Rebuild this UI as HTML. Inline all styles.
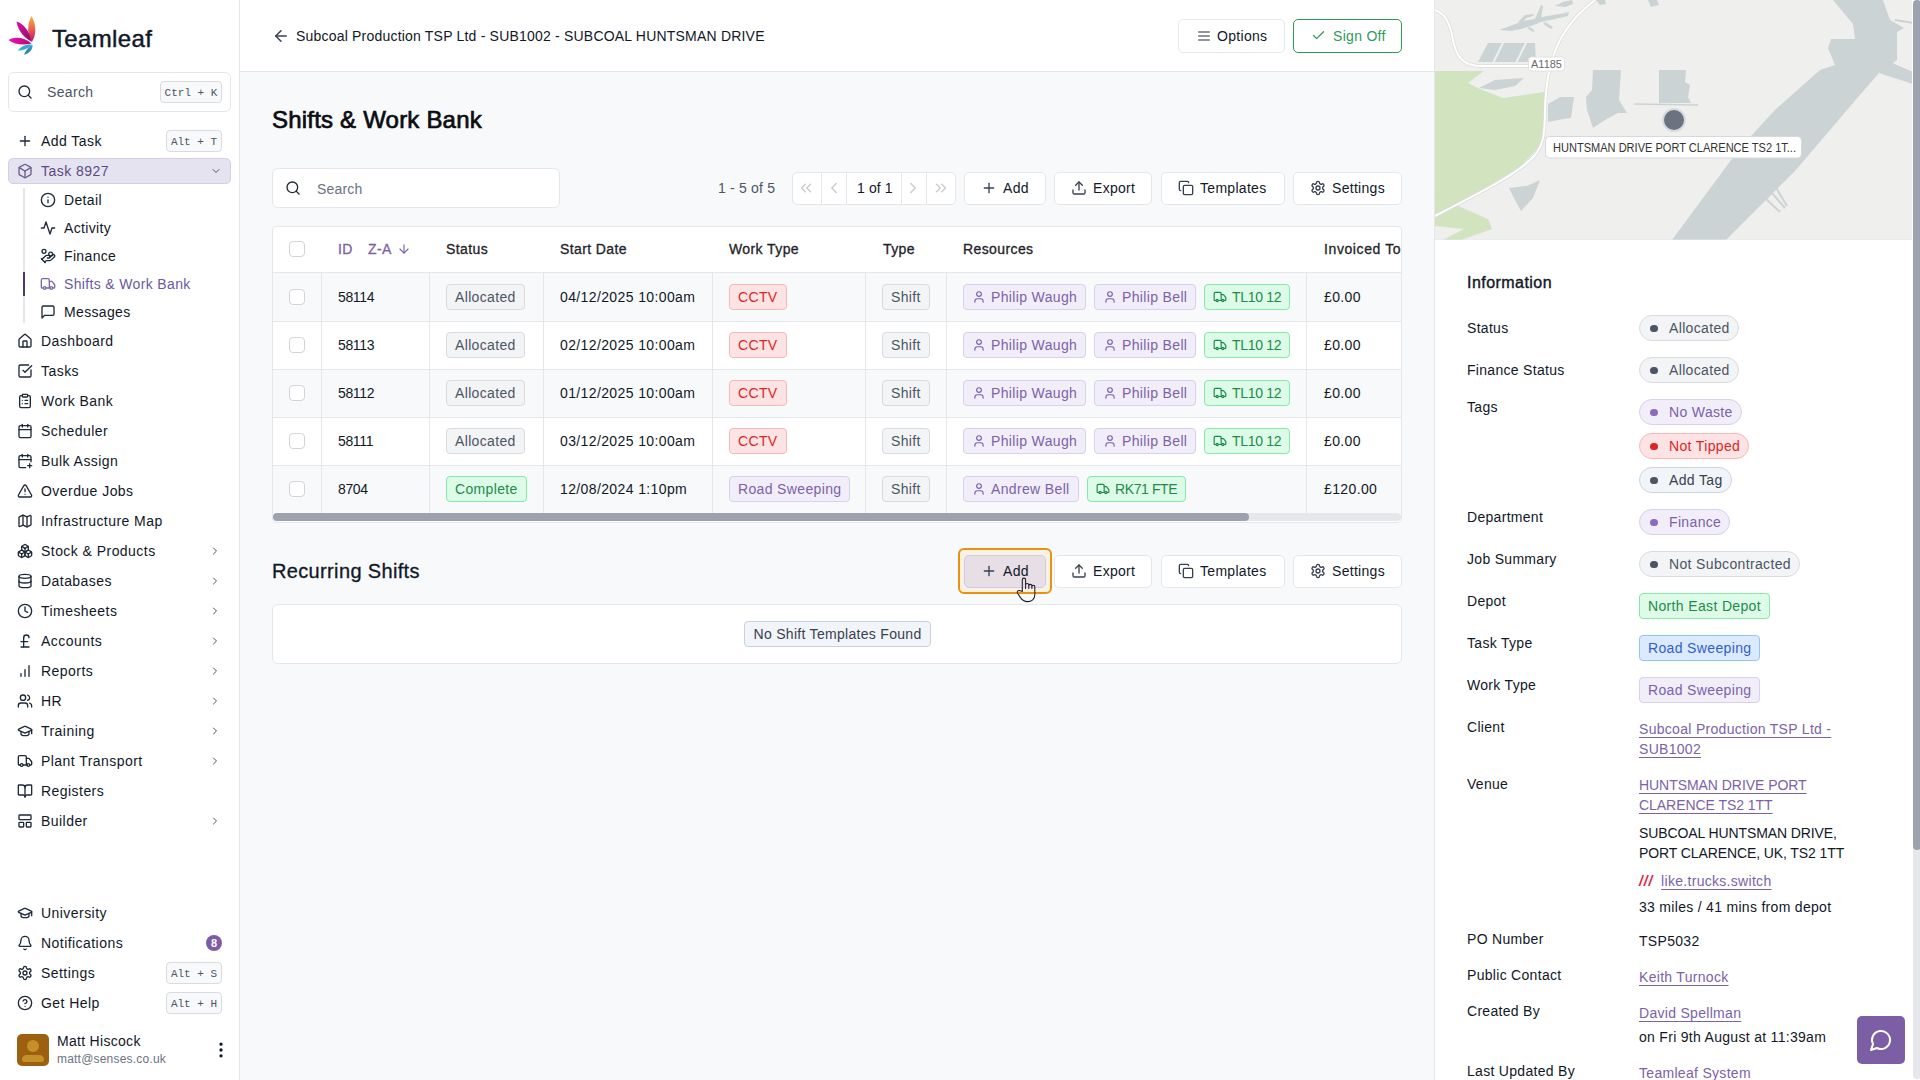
<!DOCTYPE html>
<html><head><meta charset="utf-8">
<style>
*{box-sizing:border-box;margin:0;padding:0}
html,body{width:1920px;height:1080px;overflow:hidden;background:#f8f9fb;font-family:"Liberation Sans",sans-serif;color:#111827}
.abs{position:absolute}
svg.i{fill:none;stroke:currentColor;stroke-width:2;stroke-linecap:round;stroke-linejoin:round}
#side{position:absolute;left:0;top:0;width:240px;height:1080px;background:#fff;border-right:1px solid #e5e7eb}
.nav{position:absolute;left:0;width:240px;height:30px;font-size:14px;letter-spacing:0.45px;color:#111827}
.nav svg{position:absolute;left:17px;top:7px;width:16px;height:16px;color:#1f2937}
.nav span{position:absolute;left:41px;top:7px;line-height:16px}
.nav svg.chev{left:209px;top:9px;width:12px;height:12px;color:#4b5563}
.kbd{position:absolute;font-family:"Liberation Mono",monospace;font-size:11px;color:#4b5563;background:#f8f9fb;border:1px solid #d9dbe1;border-radius:4px;text-align:center;line-height:21px;padding-top:1px;letter-spacing:0}
.sub{position:absolute;left:24px;width:210px;height:28px;font-size:14px;letter-spacing:0.35px}
.sub svg{position:absolute;left:16px;top:6px;width:16px;height:16px;color:#1f2937}
.sub span{position:absolute;left:40px;top:6px;line-height:16px}
#main{position:absolute;left:240px;top:0;width:1195px;height:1080px;background:#f8f9fb}
#hdr{position:absolute;left:0;top:0;width:1195px;height:72px;background:#fff;border-bottom:1px solid #e5e7eb}
.btn{position:absolute;height:33px;background:#fff;border:1px solid #e5e7eb;border-radius:5px;font-size:14px;letter-spacing:0.3px;color:#111827}
.btn svg{position:absolute;width:16px;height:16px;top:7px;color:#374151}
.btn span{position:absolute;top:7px;line-height:16px}
.pill{position:absolute;height:26px;border-width:1px;border-style:solid;border-radius:4px;font-size:14px;letter-spacing:0.35px;line-height:24px;padding:0 8px;white-space:nowrap}
.gray{background:#f3f4f6;border-color:#d8dbe0;color:#4b5563}
.red{background:#fde3e3;border-color:#f9b8b8;color:#dc2626}
.green{background:#dcfce7;border-color:#86e9a9;color:#1f8a4c}
.purple{background:#f1eef9;border-color:#d9cfee;color:#7b62a8}
.blue{background:#dbeafe;border-color:#93c5fd;color:#2f5fd0}
.pill svg{width:14px;height:14px;vertical-align:-2px;margin-right:5px}
.cell{position:absolute;font-size:14px;letter-spacing:0.38px;line-height:16px;color:#111827;white-space:nowrap}
.hcell{position:absolute;font-size:14px;font-weight:400;-webkit-text-stroke:0.3px currentColor;letter-spacing:0.4px;line-height:16px;color:#1f2328;white-space:nowrap}
.cb{position:absolute;width:16px;height:16px;border:1px solid #d1d5db;border-radius:4px;background:#fff}
#right{position:absolute;left:1434px;top:0;width:486px;height:1080px;background:#fff;border-left:1px solid #e5e7eb;overflow:hidden}
.lbl{position:absolute;left:32px;font-size:14px;letter-spacing:0.3px;line-height:16px;color:#111827;white-space:nowrap}
.val{position:absolute;left:204px;font-size:14px;letter-spacing:0.3px;line-height:16px;color:#111827;white-space:nowrap}
.lnk{color:#7b62a8;text-decoration:underline;text-underline-offset:3px;text-decoration-thickness:1px}
.tag{position:absolute;left:204px;height:26px;border-width:1px;border-style:solid;border-radius:13px;font-size:14px;letter-spacing:0.35px;line-height:24px;padding:0 8px 0 29px;white-space:nowrap}
.tag i{position:absolute;left:10px;top:8.5px;width:7.5px;height:7.5px;border-radius:4px}
.rect{position:absolute;left:204px;height:26px;border-width:1px;border-style:solid;border-radius:4px;font-size:14px;letter-spacing:0.35px;line-height:24px;padding:0 8px;white-space:nowrap}

</style></head><body>
<div id="side"><svg class="abs" style="left:0;top:0;width:48px;height:62px" viewBox="0 0 48 62">
    <defs>
      <linearGradient id="g1" x1="0" y1="0" x2="0" y2="1"><stop offset="0" stop-color="#f9b233"/><stop offset="0.45" stop-color="#ee6a4a"/><stop offset="1" stop-color="#c2106f"/></linearGradient>
      <linearGradient id="g2" x1="0" y1="0" x2="1" y2="1"><stop offset="0" stop-color="#e40fa0"/><stop offset="1" stop-color="#86106a"/></linearGradient>
      <linearGradient id="g4" x1="0" y1="0" x2="1" y2="0"><stop offset="0" stop-color="#f20fb0"/><stop offset="1" stop-color="#b5087a"/></linearGradient>
      <linearGradient id="g3" x1="0" y1="0" x2="1" y2="0"><stop offset="0" stop-color="#28b8e8"/><stop offset="1" stop-color="#3a9bd0"/></linearGradient>
      <linearGradient id="g5" x1="0" y1="1" x2="1" y2="0"><stop offset="0" stop-color="#1e7f7f"/><stop offset="1" stop-color="#3a9fd8"/></linearGradient>
    </defs>
    <path d="M31.8 42 C27 35 27 24 31.5 16 C36 24 37 34 31.8 42Z" fill="url(#g1)"/>
    <path d="M31.2 41.5 C26 39 18 32 16.5 21.5 C24 23.5 30 32 31.2 41.5Z" fill="url(#g2)"/>
    <path d="M31.5 43.5 C24 45.5 14 44.5 8.5 40 C15 36 25 37.5 31.5 43.5Z" fill="url(#g4)"/>
    <path d="M32 44.5 C28 49 22 51 17.8 50.5 C21 46 27 44 32 44.5Z" fill="url(#g3)"/>
    <path d="M32.5 44.8 C33 50 28.5 54 24 54.8 C26 50 29 46.5 32.5 44.8Z" fill="url(#g5)"/>
  </svg>
<div class="abs" style="left:52px;top:24.5px;font-size:24px;font-weight:400;-webkit-text-stroke:0.45px #111827;letter-spacing:0.35px;line-height:28px;color:#111827">Teamleaf</div>
<div class="abs" style="left:8px;top:72px;width:223px;height:40px;border:1px solid #e5e7eb;border-radius:6px;background:#fff"></div>
<svg class="i" style="position:absolute;left:17px;top:84px;width:16px;height:16px;color:#1f2937" viewBox="0 0 24 24"><circle cx="11" cy="11" r="8"/><path d="m21 21-4.3-4.3"/></svg>
<div class="abs" style="left:47px;top:84px;font-size:14px;letter-spacing:0.35px;color:#4b5563;line-height:16px">Search</div>
<div class="kbd" style="left:160px;top:81px;width:62px;height:22px">Ctrl + K</div>
<div class="nav" style="top:126px"><svg class="i" style="" viewBox="0 0 24 24"><path d="M5 12h14"/><path d="M12 5v14"/></svg><span>Add Task</span></div>
<div class="kbd" style="left:166px;top:130px;width:56px;height:22px">Alt + T</div>
<div class="abs" style="left:8px;top:158px;width:223px;height:26px;background:#e6e3f1;border:1px solid #d6cde8;border-radius:5px"></div>
<div class="nav" style="top:156px;color:#5b4a7e"><svg class="i" style="color:#6b5a8e" viewBox="0 0 24 24"><path d="M21 8a2 2 0 0 0-1-1.73l-7-4a2 2 0 0 0-2 0l-7 4A2 2 0 0 0 3 8v8a2 2 0 0 0 1 1.73l7 4a2 2 0 0 0 2 0l7-4A2 2 0 0 0 21 16Z"/><path d="m3.3 7 8.7 5 8.7-5"/><path d="M12 22V12"/></svg><span>Task 8927</span><svg class="i chev" style="color:#5b4a7e;left:210px" viewBox="0 0 24 24"><path d="m6 9 6 6 6-6"/></svg></div>
<div class="abs" style="left:23px;top:188px;width:2px;height:135px;background:#e5e7eb"></div>
<div class="abs" style="left:23px;top:272px;width:2px;height:24px;background:#4a3a6e"></div>
<div class="sub" style="top:186px"><svg class="i" style="" viewBox="0 0 24 24"><circle cx="12" cy="12" r="10"/><path d="M12 16v-4"/><path d="M12 8h.01"/></svg><span>Detail</span></div>
<div class="sub" style="top:214px"><svg class="i" style="" viewBox="0 0 24 24"><path d="M22 12h-4l-3 9L9 3l-3 9H2"/></svg><span>Activity</span></div>
<div class="sub" style="top:242px"><svg class="i" style="" viewBox="0 0 24 24"><path d="M11 15h2a2 2 0 1 0 0-4h-3c-.6 0-1.1.2-1.4.6L3 17"/><path d="m7 21 1.6-1.4c.3-.4.8-.6 1.4-.6h4c1.1 0 2.1-.4 2.8-1.2l4.6-4.4a2 2 0 0 0-2.75-2.91l-4.2 3.9"/><path d="m2 16 6 6"/><circle cx="16" cy="9" r="2.9"/><circle cx="6" cy="5" r="3"/></svg><span>Finance</span></div>
<div class="sub" style="top:270px;color:#6b5a9e"><svg class="i" style="color:#7c6aa8" viewBox="0 0 24 24"><path d="M14 18V6a2 2 0 0 0-2-2H4a2 2 0 0 0-2 2v11a1 1 0 0 0 1 1h2"/><path d="M15 18H9"/><path d="M19 18h2a1 1 0 0 0 1-1v-3.65a1 1 0 0 0-.22-.624l-3.48-4.35A1 1 0 0 0 17.52 8H14"/><circle cx="17" cy="18" r="2"/><circle cx="7" cy="18" r="2"/></svg><span>Shifts &amp; Work Bank</span></div>
<div class="sub" style="top:298px"><svg class="i" style="" viewBox="0 0 24 24"><path d="M21 15a2 2 0 0 1-2 2H7l-4 4V5a2 2 0 0 1 2-2h14a2 2 0 0 1 2 2z"/></svg><span>Messages</span></div>
<div class="nav" style="top:326px"><svg class="i" style="" viewBox="0 0 24 24"><path d="M15 21v-8a1 1 0 0 0-1-1h-4a1 1 0 0 0-1 1v8"/><path d="M3 10a2 2 0 0 1 .709-1.528l7-5.999a2 2 0 0 1 2.582 0l7 5.999A2 2 0 0 1 21 10v9a2 2 0 0 1-2 2H5a2 2 0 0 1-2-2z"/></svg><span>Dashboard</span></div>
<div class="nav" style="top:356px"><svg class="i" style="" viewBox="0 0 24 24"><path d="M21 10.5V19a2 2 0 0 1-2 2H5a2 2 0 0 1-2-2V5a2 2 0 0 1 2-2h12.5"/><path d="m9 11 3 3L22 4"/></svg><span>Tasks</span></div>
<div class="nav" style="top:386px"><svg class="i" style="" viewBox="0 0 24 24"><rect width="8" height="4" x="8" y="2" rx="1"/><path d="M16 4h2a2 2 0 0 1 2 2v14a2 2 0 0 1-2 2H6a2 2 0 0 1-2-2V6a2 2 0 0 1 2-2h2"/><path d="M12 11h4"/><path d="M12 16h4"/><path d="M8 11h.01"/><path d="M8 16h.01"/></svg><span>Work Bank</span></div>
<div class="nav" style="top:416px"><svg class="i" style="" viewBox="0 0 24 24"><path d="M8 2v4"/><path d="M16 2v4"/><rect width="18" height="18" x="3" y="4" rx="2"/><path d="M3 10h18"/></svg><span>Scheduler</span></div>
<div class="nav" style="top:446px"><svg class="i" style="" viewBox="0 0 24 24"><path d="M8 2v4"/><path d="M16 2v4"/><path d="M21 13V6a2 2 0 0 0-2-2H5a2 2 0 0 0-2 2v14a2 2 0 0 0 2 2h8"/><path d="M3 10h18"/><path d="M16 19h6"/><path d="M19 16v6"/></svg><span>Bulk Assign</span></div>
<div class="nav" style="top:476px"><svg class="i" style="" viewBox="0 0 24 24"><path d="m21.73 18-8-14a2 2 0 0 0-3.48 0l-8 14A2 2 0 0 0 4 21h16a2 2 0 0 0 1.73-3"/><path d="M12 9v4"/><path d="M12 17h.01"/></svg><span>Overdue Jobs</span></div>
<div class="nav" style="top:506px"><svg class="i" style="" viewBox="0 0 24 24"><path d="M14.106 5.553a2 2 0 0 0 1.788 0l3.659-1.83A1 1 0 0 1 21 4.619v12.764a1 1 0 0 1-.553.894l-4.553 2.277a2 2 0 0 1-1.788 0l-4.212-2.106a2 2 0 0 0-1.788 0l-3.659 1.83A1 1 0 0 1 3 19.381V6.618a1 1 0 0 1 .553-.894l4.553-2.277a2 2 0 0 1 1.788 0z"/><path d="M15 5.764v15"/><path d="M9 3.236v15"/></svg><span>Infrastructure Map</span></div>
<div class="nav" style="top:536px"><svg class="i" style="" viewBox="0 0 24 24"><path d="M2.97 12.92A2 2 0 0 0 2 14.63v3.24a2 2 0 0 0 .97 1.71l3 1.8a2 2 0 0 0 2.06 0L12 19v-5.5l-5-3-4.03 2.42Z"/><path d="m7 16.5-4.74-2.85"/><path d="m7 16.5 5-3"/><path d="M7 16.5v5.17"/><path d="M12 13.5V19l3.97 2.38a2 2 0 0 0 2.06 0l3-1.8a2 2 0 0 0 .97-1.71v-3.24a2 2 0 0 0-.97-1.71L17 10.5l-5 3Z"/><path d="m17 16.5-5-3"/><path d="m17 16.5 4.74-2.85"/><path d="M17 16.5v5.17"/><path d="M7.97 4.42A2 2 0 0 0 7 6.13v4.37l5 3 5-3V6.13a2 2 0 0 0-.97-1.71l-3-1.8a2 2 0 0 0-2.06 0l-3 1.8Z"/><path d="M12 8 7.26 5.15"/><path d="m12 8 4.74-2.85"/><path d="M12 13.5V8"/></svg><span>Stock &amp; Products</span><svg class="i chev" style="" viewBox="0 0 24 24"><path d="m9 18 6-6-6-6"/></svg></div>
<div class="nav" style="top:566px"><svg class="i" style="" viewBox="0 0 24 24"><ellipse cx="12" cy="5" rx="9" ry="3"/><path d="M3 5V19A9 3 0 0 0 21 19V5"/><path d="M3 12A9 3 0 0 0 21 12"/></svg><span>Databases</span><svg class="i chev" style="" viewBox="0 0 24 24"><path d="m9 18 6-6-6-6"/></svg></div>
<div class="nav" style="top:596px"><svg class="i" style="" viewBox="0 0 24 24"><circle cx="12" cy="12" r="10"/><path d="M12 6v6l4 2"/></svg><span>Timesheets</span><svg class="i chev" style="" viewBox="0 0 24 24"><path d="m9 18 6-6-6-6"/></svg></div>
<div class="nav" style="top:626px"><svg class="i" style="" viewBox="0 0 24 24"><path d="M18 7c0-5.333-8-5.333-8 0"/><path d="M10 7v14"/><path d="M6 21h12"/><path d="M6 13h10"/></svg><span>Accounts</span><svg class="i chev" style="" viewBox="0 0 24 24"><path d="m9 18 6-6-6-6"/></svg></div>
<div class="nav" style="top:656px"><svg class="i" style="" viewBox="0 0 24 24"><path d="M12 20V10"/><path d="M18 20V4"/><path d="M6 20v-4"/></svg><span>Reports</span><svg class="i chev" style="" viewBox="0 0 24 24"><path d="m9 18 6-6-6-6"/></svg></div>
<div class="nav" style="top:686px"><svg class="i" style="" viewBox="0 0 24 24"><path d="M16 21v-2a4 4 0 0 0-4-4H6a4 4 0 0 0-4 4v2"/><circle cx="9" cy="7" r="4"/><path d="M22 21v-2a4 4 0 0 0-3-3.87"/><path d="M16 3.13a4 4 0 0 1 0 7.75"/></svg><span>HR</span><svg class="i chev" style="" viewBox="0 0 24 24"><path d="m9 18 6-6-6-6"/></svg></div>
<div class="nav" style="top:716px"><svg class="i" style="" viewBox="0 0 24 24"><path d="M21.42 10.922a1 1 0 0 0-.019-1.838L12.83 5.18a2 2 0 0 0-1.66 0L2.6 9.08a1 1 0 0 0 0 1.832l8.57 3.908a2 2 0 0 0 1.66 0z"/><path d="M22 10v6"/><path d="M6 12.5V16a6 3 0 0 0 12 0v-3.5"/></svg><span>Training</span><svg class="i chev" style="" viewBox="0 0 24 24"><path d="m9 18 6-6-6-6"/></svg></div>
<div class="nav" style="top:746px"><svg class="i" style="" viewBox="0 0 24 24"><path d="M14 18V6a2 2 0 0 0-2-2H4a2 2 0 0 0-2 2v11a1 1 0 0 0 1 1h2"/><path d="M15 18H9"/><path d="M19 18h2a1 1 0 0 0 1-1v-3.65a1 1 0 0 0-.22-.624l-3.48-4.35A1 1 0 0 0 17.52 8H14"/><circle cx="17" cy="18" r="2"/><circle cx="7" cy="18" r="2"/></svg><span>Plant Transport</span><svg class="i chev" style="" viewBox="0 0 24 24"><path d="m9 18 6-6-6-6"/></svg></div>
<div class="nav" style="top:776px"><svg class="i" style="" viewBox="0 0 24 24"><path d="M12 7v14"/><path d="M3 18a1 1 0 0 1-1-1V4a1 1 0 0 1 1-1h5a4 4 0 0 1 4 4 4 4 0 0 1 4-4h5a1 1 0 0 1 1 1v13a1 1 0 0 1-1 1h-6a3 3 0 0 0-3 3 3 3 0 0 0-3-3z"/></svg><span>Registers</span></div>
<div class="nav" style="top:806px"><svg class="i" style="" viewBox="0 0 24 24"><rect width="18" height="7" x="3" y="3" rx="1"/><rect width="7" height="7" x="3" y="14" rx="1"/><rect width="7" height="7" x="14" y="14" rx="1"/></svg><span>Builder</span><svg class="i chev" style="" viewBox="0 0 24 24"><path d="m9 18 6-6-6-6"/></svg></div>
<div class="nav" style="top:898px"><svg class="i" style="" viewBox="0 0 24 24"><path d="M21.42 10.922a1 1 0 0 0-.019-1.838L12.83 5.18a2 2 0 0 0-1.66 0L2.6 9.08a1 1 0 0 0 0 1.832l8.57 3.908a2 2 0 0 0 1.66 0z"/><path d="M22 10v6"/><path d="M6 12.5V16a6 3 0 0 0 12 0v-3.5"/></svg><span>University</span></div>
<div class="nav" style="top:928px"><svg class="i" style="" viewBox="0 0 24 24"><path d="M10.268 21a2 2 0 0 0 3.464 0"/><path d="M3.262 15.326A1 1 0 0 0 4 17h16a1 1 0 0 0 .74-1.673C19.41 13.956 18 12.499 18 8A6 6 0 0 0 6 8c0 4.499-1.411 5.956-2.738 7.326"/></svg><span>Notifications</span></div>
<div class="nav" style="top:958px"><svg class="i" style="" viewBox="0 0 24 24"><path d="M12.22 2h-.44a2 2 0 0 0-2 2v.18a2 2 0 0 1-1 1.73l-.43.25a2 2 0 0 1-2 0l-.15-.08a2 2 0 0 0-2.73.73l-.22.38a2 2 0 0 0 .73 2.73l.15.1a2 2 0 0 1 1 1.72v.51a2 2 0 0 1-1 1.74l-.15.09a2 2 0 0 0-.73 2.73l.22.38a2 2 0 0 0 2.73.73l.15-.08a2 2 0 0 1 2 0l.43.25a2 2 0 0 1 1 1.73V20a2 2 0 0 0 2 2h.44a2 2 0 0 0 2-2v-.18a2 2 0 0 1 1-1.73l.43-.25a2 2 0 0 1 2 0l.15.08a2 2 0 0 0 2.73-.73l.22-.39a2 2 0 0 0-.73-2.73l-.15-.08a2 2 0 0 1-1-1.74v-.5a2 2 0 0 1 1-1.74l.15-.09a2 2 0 0 0 .73-2.73l-.22-.38a2 2 0 0 0-2.73-.73l-.15.08a2 2 0 0 1-2 0l-.43-.25a2 2 0 0 1-1-1.73V4a2 2 0 0 0-2-2z"/><circle cx="12" cy="12" r="3"/></svg><span>Settings</span></div>
<div class="nav" style="top:988px"><svg class="i" style="" viewBox="0 0 24 24"><circle cx="12" cy="12" r="10"/><path d="M9.09 9a3 3 0 0 1 5.83 1c0 2-3 3-3 3"/><path d="M12 17h.01"/></svg><span>Get Help</span></div>
<div class="abs" style="left:206px;top:935px;width:16px;height:16px;border-radius:8px;background:#7b5ea7;color:#fff;font-size:11px;font-weight:700;text-align:center;line-height:16px">8</div>
<div class="kbd" style="left:166px;top:962px;width:56px;height:22px">Alt + S</div>
<div class="kbd" style="left:166px;top:992px;width:56px;height:22px">Alt + H</div>
<div class="abs" style="left:17px;top:1034px;width:32px;height:32px;border-radius:5px;background:#9c6010;overflow:hidden">
      <div class="abs" style="left:10px;top:6px;width:12px;height:12px;border-radius:6px;background:#c58f2a"></div>
      <div class="abs" style="left:5px;top:21px;width:22px;height:7px;border-radius:6px 6px 3px 3px;background:#c58f2a"></div></div>
<div class="abs" style="left:57px;top:1033px;font-size:14px;letter-spacing:0.3px;line-height:16px;color:#111827">Matt Hiscock</div>
<div class="abs" style="left:57px;top:1052px;font-size:12px;letter-spacing:0.2px;line-height:14px;color:#6b7280">matt@senses.co.uk</div>
<svg class="i" style="position:absolute;left:211px;top:1040px;width:20px;height:20px;color:#111827" viewBox="0 0 24 24" stroke-width="2.5"><circle cx="12" cy="12" r="1"/><circle cx="12" cy="5" r="1"/><circle cx="12" cy="19" r="1"/></svg></div>
<div id="main"><div id="hdr"></div>
<svg class="i" style="position:absolute;left:32px;top:27px;width:18px;height:18px;color:#374151" viewBox="0 0 24 24"><path d="m12 19-7-7 7-7"/><path d="M19 12H5"/></svg>
<div class="abs" style="left:56px;top:28px;font-size:14px;letter-spacing:0.2px;line-height:16px;color:#111827">Subcoal Production TSP Ltd - SUB1002 - SUBCOAL HUNTSMAN DRIVE</div>
<div class="btn" style="left:938px;top:19px;width:107px;height:34px;"><svg class="i" style="left:17px;top:8px;color:#6b7280" viewBox="0 0 24 24"><path d="M4 12h16"/><path d="M4 6h16"/><path d="M4 18h16"/></svg><span style="left:38px;top:8px">Options</span></div>
<div class="btn" style="left:1053px;top:19px;width:109px;height:34px;border-color:#2e9a55;color:#2f9a5a"><svg class="i" style="left:17px;top:8px;color:#2f9a5a;width:15px;height:15px" viewBox="0 0 24 24"><path d="M20 6 9 17l-5-5"/></svg><span style="left:39px;top:8px">Sign Off</span></div>
<div class="abs" style="left:32px;top:106px;font-size:24px;font-weight:400;-webkit-text-stroke:0.7px #0b0d12;letter-spacing:0.2px;line-height:28px;color:#0b0d12">Shifts &amp; Work Bank</div>
<div class="abs" style="left:32px;top:168px;width:288px;height:40px;background:#fff;border:1px solid #e5e7eb;border-radius:6px"></div>
<svg class="i" style="position:absolute;left:45px;top:180px;width:16px;height:16px;color:#1f2937" viewBox="0 0 24 24"><circle cx="11" cy="11" r="8"/><path d="m21 21-4.3-4.3"/></svg>
<div class="abs" style="left:77px;top:181px;font-size:14px;letter-spacing:0.2px;line-height:16px;color:#6b7280">Search</div>
<div class="abs" style="left:478px;top:180px;font-size:14px;letter-spacing:0.2px;line-height:16px;color:#4b5563">1 - 5 of 5</div>
<div class="abs" style="left:552px;top:172px;width:164px;height:33px;background:#fff;border:1px solid #e5e7eb;border-radius:5px"></div>
<div class="abs" style="left:581px;top:173px;width:1px;height:31px;background:#e5e7eb"></div>
<div class="abs" style="left:606px;top:173px;width:1px;height:31px;background:#e5e7eb"></div>
<div class="abs" style="left:661px;top:173px;width:1px;height:31px;background:#e5e7eb"></div>
<div class="abs" style="left:686px;top:173px;width:1px;height:31px;background:#e5e7eb"></div>
<svg class="i" style="position:absolute;left:557px;top:179px;width:18px;height:18px;color:#c9cdd3" viewBox="0 0 24 24"><path d="m11 17-5-5 5-5"/><path d="m18 17-5-5 5-5"/></svg>
<svg class="i" style="position:absolute;left:585px;top:179px;width:18px;height:18px;color:#c9cdd3" viewBox="0 0 24 24"><path d="m15 18-6-6 6-6"/></svg>
<div class="abs" style="left:617px;top:180px;font-size:14px;letter-spacing:0.1px;line-height:16px;color:#111827">1 of 1</div>
<svg class="i" style="position:absolute;left:664px;top:179px;width:18px;height:18px;color:#c9cdd3" viewBox="0 0 24 24"><path d="m9 18 6-6-6-6"/></svg>
<svg class="i" style="position:absolute;left:692px;top:179px;width:18px;height:18px;color:#c9cdd3" viewBox="0 0 24 24"><path d="m6 17 5-5-5-5"/><path d="m13 17 5-5-5-5"/></svg>
<div class="btn" style="left:724px;top:172px;width:82px;height:33px;"><svg class="i" style="left:16px;" viewBox="0 0 24 24"><path d="M5 12h14"/><path d="M12 5v14"/></svg><span style="left:38px;">Add</span></div>
<div class="btn" style="left:814px;top:172px;width:98px;height:33px;"><svg class="i" style="left:16px;" viewBox="0 0 24 24"><path d="M21 15v4a2 2 0 0 1-2 2H5a2 2 0 0 1-2-2v-4"/><path d="m17 8-5-5-5 5"/><path d="M12 3v12"/></svg><span style="left:38px;">Export</span></div>
<div class="btn" style="left:921px;top:172px;width:124px;height:33px;"><svg class="i" style="left:16px;" viewBox="0 0 24 24"><rect width="14" height="14" x="8" y="8" rx="2" ry="2"/><path d="M4 16c-1.1 0-2-.9-2-2V4c0-1.1.9-2 2-2h10c1.1 0 2 .9 2 2"/></svg><span style="left:38px;">Templates</span></div>
<div class="btn" style="left:1053px;top:172px;width:109px;height:33px;"><svg class="i" style="left:16px;" viewBox="0 0 24 24"><path d="M12.22 2h-.44a2 2 0 0 0-2 2v.18a2 2 0 0 1-1 1.73l-.43.25a2 2 0 0 1-2 0l-.15-.08a2 2 0 0 0-2.73.73l-.22.38a2 2 0 0 0 .73 2.73l.15.1a2 2 0 0 1 1 1.72v.51a2 2 0 0 1-1 1.74l-.15.09a2 2 0 0 0-.73 2.73l.22.38a2 2 0 0 0 2.73.73l.15-.08a2 2 0 0 1 2 0l.43.25a2 2 0 0 1 1 1.73V20a2 2 0 0 0 2 2h.44a2 2 0 0 0 2-2v-.18a2 2 0 0 1 1-1.73l.43-.25a2 2 0 0 1 2 0l.15.08a2 2 0 0 0 2.73-.73l.22-.39a2 2 0 0 0-.73-2.73l-.15-.08a2 2 0 0 1-1-1.74v-.5a2 2 0 0 1 1-1.74l.15-.09a2 2 0 0 0 .73-2.73l-.22-.38a2 2 0 0 0-2.73-.73l-.15.08a2 2 0 0 1-2 0l-.43-.25a2 2 0 0 1-1-1.73V4a2 2 0 0 0-2-2z"/><circle cx="12" cy="12" r="3"/></svg><span style="left:38px;">Settings</span></div>
<div class="abs" style="left:32px;top:226px;width:1130px;height:297px;background:#fff;border:1px solid #e5e7eb;border-radius:4px;overflow:hidden">
<div class="abs" style="left:0;top:45px;width:1130px;height:49px;background:#f8f9fb;border-top:1px solid #e5e7eb"></div>
<div class="abs" style="left:0;top:94px;width:1130px;height:48px;background:#fff;border-top:1px solid #e5e7eb"></div>
<div class="abs" style="left:0;top:142px;width:1130px;height:48px;background:#f8f9fb;border-top:1px solid #e5e7eb"></div>
<div class="abs" style="left:0;top:190px;width:1130px;height:48px;background:#fff;border-top:1px solid #e5e7eb"></div>
<div class="abs" style="left:0;top:238px;width:1130px;height:48px;background:#f8f9fb;border-top:1px solid #e5e7eb"></div>
<div class="abs" style="left:48px;top:46px;width:1px;height:240px;background:#e5e7eb"></div>
<div class="abs" style="left:156px;top:46px;width:1px;height:240px;background:#e5e7eb"></div>
<div class="abs" style="left:270px;top:46px;width:1px;height:240px;background:#e5e7eb"></div>
<div class="abs" style="left:439px;top:46px;width:1px;height:240px;background:#e5e7eb"></div>
<div class="abs" style="left:592px;top:46px;width:1px;height:240px;background:#e5e7eb"></div>
<div class="abs" style="left:673px;top:46px;width:1px;height:240px;background:#e5e7eb"></div>
<div class="abs" style="left:1033px;top:46px;width:1px;height:240px;background:#e5e7eb"></div>
<div class="cb" style="left:16px;top:14px"></div>
<div class="hcell" style="left:65px;top:14px;color:#7b62a8">ID</div>
<div class="hcell" style="left:95px;top:14px;color:#7b62a8">Z-A</div>
<svg class="i" style="position:absolute;left:124px;top:15px;width:14px;height:14px;color:#7b62a8" viewBox="0 0 24 24"><path d="M12 5v14"/><path d="m19 12-7 7-7-7"/></svg>
<div class="hcell" style="left:173px;top:14px">Status</div>
<div class="hcell" style="left:287px;top:14px">Start Date</div>
<div class="hcell" style="left:456px;top:14px">Work Type</div>
<div class="hcell" style="left:610px;top:14px">Type</div>
<div class="hcell" style="left:690px;top:14px">Resources</div>
<div class="hcell" style="left:1051px;top:14px;letter-spacing:0.6px">Invoiced Total</div>
<div class="cb" style="left:16px;top:62px"></div>
<div class="cell" style="left:65px;top:62px;letter-spacing:-0.35px">58114</div>
<div class="pill gray" style="left:173px;top:57px">Allocated</div>
<div class="cell" style="left:287px;top:62px">04/12/2025 10:00am</div>
<div class="pill red" style="left:456px;top:57px">CCTV</div>
<div class="pill gray" style="left:609px;top:57px">Shift</div>
<div class="pill purple" style="left:690px;top:57px"><svg class="i" style="" viewBox="0 0 24 24"><path d="M19 21v-2a4 4 0 0 0-4-4H9a4 4 0 0 0-4 4v2"/><circle cx="12" cy="7" r="4"/></svg>Philip Waugh</div>
<div class="pill purple" style="left:821px;top:57px"><svg class="i" style="" viewBox="0 0 24 24"><path d="M19 21v-2a4 4 0 0 0-4-4H9a4 4 0 0 0-4 4v2"/><circle cx="12" cy="7" r="4"/></svg>Philip Bell</div>
<div class="pill green" style="left:931px;top:57px"><svg class="i" style="" viewBox="0 0 24 24"><path d="M14 18V6a2 2 0 0 0-2-2H4a2 2 0 0 0-2 2v11a1 1 0 0 0 1 1h2"/><path d="M15 18H9"/><path d="M19 18h2a1 1 0 0 0 1-1v-3.65a1 1 0 0 0-.22-.624l-3.48-4.35A1 1 0 0 0 17.52 8H14"/><circle cx="17" cy="18" r="2"/><circle cx="7" cy="18" r="2"/></svg><b style="font-weight:400;letter-spacing:-0.3px">TL10 12</b></div>
<div class="cell" style="left:1051px;top:62px">&pound;0.00</div>
<div class="cb" style="left:16px;top:110px"></div>
<div class="cell" style="left:65px;top:110px;letter-spacing:-0.35px">58113</div>
<div class="pill gray" style="left:173px;top:105px">Allocated</div>
<div class="cell" style="left:287px;top:110px">02/12/2025 10:00am</div>
<div class="pill red" style="left:456px;top:105px">CCTV</div>
<div class="pill gray" style="left:609px;top:105px">Shift</div>
<div class="pill purple" style="left:690px;top:105px"><svg class="i" style="" viewBox="0 0 24 24"><path d="M19 21v-2a4 4 0 0 0-4-4H9a4 4 0 0 0-4 4v2"/><circle cx="12" cy="7" r="4"/></svg>Philip Waugh</div>
<div class="pill purple" style="left:821px;top:105px"><svg class="i" style="" viewBox="0 0 24 24"><path d="M19 21v-2a4 4 0 0 0-4-4H9a4 4 0 0 0-4 4v2"/><circle cx="12" cy="7" r="4"/></svg>Philip Bell</div>
<div class="pill green" style="left:931px;top:105px"><svg class="i" style="" viewBox="0 0 24 24"><path d="M14 18V6a2 2 0 0 0-2-2H4a2 2 0 0 0-2 2v11a1 1 0 0 0 1 1h2"/><path d="M15 18H9"/><path d="M19 18h2a1 1 0 0 0 1-1v-3.65a1 1 0 0 0-.22-.624l-3.48-4.35A1 1 0 0 0 17.52 8H14"/><circle cx="17" cy="18" r="2"/><circle cx="7" cy="18" r="2"/></svg><b style="font-weight:400;letter-spacing:-0.3px">TL10 12</b></div>
<div class="cell" style="left:1051px;top:110px">&pound;0.00</div>
<div class="cb" style="left:16px;top:158px"></div>
<div class="cell" style="left:65px;top:158px;letter-spacing:-0.35px">58112</div>
<div class="pill gray" style="left:173px;top:153px">Allocated</div>
<div class="cell" style="left:287px;top:158px">01/12/2025 10:00am</div>
<div class="pill red" style="left:456px;top:153px">CCTV</div>
<div class="pill gray" style="left:609px;top:153px">Shift</div>
<div class="pill purple" style="left:690px;top:153px"><svg class="i" style="" viewBox="0 0 24 24"><path d="M19 21v-2a4 4 0 0 0-4-4H9a4 4 0 0 0-4 4v2"/><circle cx="12" cy="7" r="4"/></svg>Philip Waugh</div>
<div class="pill purple" style="left:821px;top:153px"><svg class="i" style="" viewBox="0 0 24 24"><path d="M19 21v-2a4 4 0 0 0-4-4H9a4 4 0 0 0-4 4v2"/><circle cx="12" cy="7" r="4"/></svg>Philip Bell</div>
<div class="pill green" style="left:931px;top:153px"><svg class="i" style="" viewBox="0 0 24 24"><path d="M14 18V6a2 2 0 0 0-2-2H4a2 2 0 0 0-2 2v11a1 1 0 0 0 1 1h2"/><path d="M15 18H9"/><path d="M19 18h2a1 1 0 0 0 1-1v-3.65a1 1 0 0 0-.22-.624l-3.48-4.35A1 1 0 0 0 17.52 8H14"/><circle cx="17" cy="18" r="2"/><circle cx="7" cy="18" r="2"/></svg><b style="font-weight:400;letter-spacing:-0.3px">TL10 12</b></div>
<div class="cell" style="left:1051px;top:158px">&pound;0.00</div>
<div class="cb" style="left:16px;top:206px"></div>
<div class="cell" style="left:65px;top:206px;letter-spacing:-0.35px">58111</div>
<div class="pill gray" style="left:173px;top:201px">Allocated</div>
<div class="cell" style="left:287px;top:206px">03/12/2025 10:00am</div>
<div class="pill red" style="left:456px;top:201px">CCTV</div>
<div class="pill gray" style="left:609px;top:201px">Shift</div>
<div class="pill purple" style="left:690px;top:201px"><svg class="i" style="" viewBox="0 0 24 24"><path d="M19 21v-2a4 4 0 0 0-4-4H9a4 4 0 0 0-4 4v2"/><circle cx="12" cy="7" r="4"/></svg>Philip Waugh</div>
<div class="pill purple" style="left:821px;top:201px"><svg class="i" style="" viewBox="0 0 24 24"><path d="M19 21v-2a4 4 0 0 0-4-4H9a4 4 0 0 0-4 4v2"/><circle cx="12" cy="7" r="4"/></svg>Philip Bell</div>
<div class="pill green" style="left:931px;top:201px"><svg class="i" style="" viewBox="0 0 24 24"><path d="M14 18V6a2 2 0 0 0-2-2H4a2 2 0 0 0-2 2v11a1 1 0 0 0 1 1h2"/><path d="M15 18H9"/><path d="M19 18h2a1 1 0 0 0 1-1v-3.65a1 1 0 0 0-.22-.624l-3.48-4.35A1 1 0 0 0 17.52 8H14"/><circle cx="17" cy="18" r="2"/><circle cx="7" cy="18" r="2"/></svg><b style="font-weight:400;letter-spacing:-0.3px">TL10 12</b></div>
<div class="cell" style="left:1051px;top:206px">&pound;0.00</div>
<div class="cb" style="left:16px;top:254px"></div>
<div class="cell" style="left:65px;top:254px;letter-spacing:-0.35px">8704</div>
<div class="pill green" style="left:173px;top:249px">Complete</div>
<div class="cell" style="left:287px;top:254px">12/08/2024 1:10pm</div>
<div class="pill purple" style="left:456px;top:249px">Road Sweeping</div>
<div class="pill gray" style="left:609px;top:249px">Shift</div>
<div class="pill purple" style="left:690px;top:249px"><svg class="i" style="" viewBox="0 0 24 24"><path d="M19 21v-2a4 4 0 0 0-4-4H9a4 4 0 0 0-4 4v2"/><circle cx="12" cy="7" r="4"/></svg>Andrew Bell</div>
<div class="pill green" style="left:814px;top:249px"><svg class="i" style="" viewBox="0 0 24 24"><path d="M14 18V6a2 2 0 0 0-2-2H4a2 2 0 0 0-2 2v11a1 1 0 0 0 1 1h2"/><path d="M15 18H9"/><path d="M19 18h2a1 1 0 0 0 1-1v-3.65a1 1 0 0 0-.22-.624l-3.48-4.35A1 1 0 0 0 17.52 8H14"/><circle cx="17" cy="18" r="2"/><circle cx="7" cy="18" r="2"/></svg><b style="font-weight:400;letter-spacing:-0.4px">RK71 FTE</b></div>
<div class="cell" style="left:1051px;top:254px">&pound;120.00</div>
<div class="abs" style="left:0;top:286px;width:1128px;height:8px;background:#e5e7eb;border-radius:4px"></div>
<div class="abs" style="left:0;top:286px;width:976px;height:8px;background:#9ca3af;border-radius:4px"></div>
</div>
<div class="abs" style="left:32px;top:559px;font-size:20px;font-weight:400;-webkit-text-stroke:0.3px #111827;letter-spacing:0.35px;line-height:24px;color:#111827">Recurring Shifts</div>
<div class="abs" style="left:718px;top:548px;width:94px;height:46px;border:2px solid #e8930f;border-radius:6px;background:#f8f1e6"></div>
<div class="btn" style="left:724px;top:555px;width:82px;height:33px;background:#e8dee6;border-color:#d5c9dc"><svg class="i" style="left:16px;" viewBox="0 0 24 24"><path d="M5 12h14"/><path d="M12 5v14"/></svg><span style="left:38px;">Add</span></div>
<div class="btn" style="left:814px;top:555px;width:98px;height:33px;"><svg class="i" style="left:16px;" viewBox="0 0 24 24"><path d="M21 15v4a2 2 0 0 1-2 2H5a2 2 0 0 1-2-2v-4"/><path d="m17 8-5-5-5 5"/><path d="M12 3v12"/></svg><span style="left:38px;">Export</span></div>
<div class="btn" style="left:921px;top:555px;width:124px;height:33px;"><svg class="i" style="left:16px;" viewBox="0 0 24 24"><rect width="14" height="14" x="8" y="8" rx="2" ry="2"/><path d="M4 16c-1.1 0-2-.9-2-2V4c0-1.1.9-2 2-2h10c1.1 0 2 .9 2 2"/></svg><span style="left:38px;">Templates</span></div>
<div class="btn" style="left:1053px;top:555px;width:109px;height:33px;"><svg class="i" style="left:16px;" viewBox="0 0 24 24"><path d="M12.22 2h-.44a2 2 0 0 0-2 2v.18a2 2 0 0 1-1 1.73l-.43.25a2 2 0 0 1-2 0l-.15-.08a2 2 0 0 0-2.73.73l-.22.38a2 2 0 0 0 .73 2.73l.15.1a2 2 0 0 1 1 1.72v.51a2 2 0 0 1-1 1.74l-.15.09a2 2 0 0 0-.73 2.73l.22.38a2 2 0 0 0 2.73.73l.15-.08a2 2 0 0 1 2 0l.43.25a2 2 0 0 1 1 1.73V20a2 2 0 0 0 2 2h.44a2 2 0 0 0 2-2v-.18a2 2 0 0 1 1-1.73l.43-.25a2 2 0 0 1 2 0l.15.08a2 2 0 0 0 2.73-.73l.22-.39a2 2 0 0 0-.73-2.73l-.15-.08a2 2 0 0 1-1-1.74v-.5a2 2 0 0 1 1-1.74l.15-.09a2 2 0 0 0 .73-2.73l-.22-.38a2 2 0 0 0-2.73-.73l-.15.08a2 2 0 0 1-2 0l-.43-.25a2 2 0 0 1-1-1.73V4a2 2 0 0 0-2-2z"/><circle cx="12" cy="12" r="3"/></svg><span style="left:38px;">Settings</span></div>
<div class="abs" style="left:32px;top:604px;width:1130px;height:60px;background:#fff;border:1px solid #e5e7eb;border-radius:6px"></div>
<div class="abs" style="left:504px;top:621px;width:187px;height:26px;background:#f1f4f8;border:1px solid #c8d2de;border-radius:4px;font-size:14px;letter-spacing:0.3px;line-height:24px;text-align:center;color:#374151">No Shift Templates Found</div>
<svg class="abs" style="left:770px;top:575px;width:30px;height:30px" viewBox="1010 575 30 30">
      <path d="M1022.3 591.5 L1022.3 579.8 C1022.3 577.6 1025.6 577.6 1025.6 579.8 L1025.6 584.6 C1025.9 583 1028.5 583 1028.8 584.6 L1028.8 585.4 C1029.1 584 1031.6 584 1031.9 585.6 L1031.9 586.2 C1032.3 584.8 1034.7 584.8 1034.8 586.6 L1034.8 595 C1034.8 599 1031.6 601.6 1027.5 601.6 C1024.5 601.6 1022.2 600.2 1020.3 597.4 L1017.6 593.2 C1016.9 592 1017.6 590.3 1019.4 590.6 Z" fill="none" stroke="#1c1c28" stroke-width="1.05" stroke-linejoin="round"/>
      <path d="M1025.6 584.6 V589 M1028.8 585.2 V589 M1031.9 585.8 V589" stroke="#1c1c28" stroke-width="1"/>
    </svg></div>
<div id="right"><svg class="abs" style="left:0;top:0;width:477px;height:240px" viewBox="0 0 477 240">
  <rect width="477" height="240" fill="#efefed"/>
  <path d="M0 71 L49 71 L33 83 L45 89 L68 98 L110 92 L110 128 L104 147 L85 167 L55 185 L25 203 L0 216Z" fill="#d1e3bf"/>
  <path d="M0 196 L53 219 L57 229 L26 240 L0 240Z" fill="#d1e3bf"/>
  <path d="M0 226 L29 229 L8 240 L0 240Z" fill="#efefed"/>
  <path d="M44 88 L60 80 L89 78 L80 86 L60 90Z" fill="#cbd3d5"/>
  <path d="M43 62 L53 43 L100 43 L101 62Z" fill="#cbd3d5"/>
  <path d="M58 63 L68 43 M81 63 L91 43" stroke="#efefed" stroke-width="2"/>
  <path d="M113 104 L125 97 L139 97 L136 118 L128 119 L113 122Z" fill="#cbd3d5"/>
  <path d="M158 70 L186 70 L184 100 L192 113 L183 113 L170 120 L158 128 L152 110 L151 97 L157 90Z" fill="#cbd3d5"/>
  <path d="M74 188 L92 186 L105 180 L98 198 L86 211 L80 200Z" fill="#cbd3d5"/>
  <path d="M224 70 L251 70 L250 82 L255 85 L253 97 L256 103 L224 103Z" fill="#cbd3d5"/>
  <path d="M199 104 L263 105" stroke="#cbd3d5" stroke-width="1.5"/>
  <path d="M64 30 L75 26 L88 21 L100 19 L112 16 L125 14 L134 12 L133 16 L120 19 L106 22 L96 26 L86 29 L76 31Z" fill="#cbd3d5"/>
  <path d="M100 19 L104 10 L106 5 L108 6 L107 12 L106 19Z M83 22 L90 15 L99 14 L98 16 L91 18 L87 23Z M95 27 L100 31 L98 32 L92 28Z M120 6 L128 2 L137 0 L138 4 L130 7Z M161 0 L170 0 L171 4 L165 5Z M213 0 L222 0 L224 5 L216 7Z M110 22 L118 27 L116 29 L108 24Z" fill="#cbd3d5"/>
  <path d="M237 240 L305 148 L340 110 L385 70 L400 65 L393 48 L396 39 L420 39 L418 24 L398 0 L448 0 L455 20 L469 28 L462 32 L462 60 L444 73 L424 96 L360 171 L291 240Z" fill="#cbd3d5"/>
  <path d="M455 62 L478 72 L478 84 L444 73Z" fill="#cbd3d5"/>
  <path d="M460 20 L478 23" stroke="#cbd3d5" stroke-width="2"/>
  <path d="M330 198 L345 212 M336 192 L350 208 M340 186 L352 206" stroke="#cbd3d5" stroke-width="2"/>
  <path d="M0 10 C10 14 15 22 18 40 C21 56 28 66 45 66 L95 66" stroke="#dcdcda" stroke-width="3.5" fill="none"/>
  <path d="M0 10 C10 14 15 22 18 40 C21 56 28 66 45 66 L95 66" stroke="#fff" stroke-width="2" fill="none"/>
  <path d="M160 0 C145 12 135 22 125 40 C115 60 111 80 110 110 C110 135 108 145 100 155 C85 172 60 185 0 216" stroke="#dcdcda" stroke-width="3.5" fill="none"/>
  <path d="M160 0 C145 12 135 22 125 40 C115 60 111 80 110 110 C110 135 108 145 100 155 C85 172 60 185 0 216" stroke="#fff" stroke-width="2" fill="none"/>
  <rect x="93.5" y="57" width="36" height="14" rx="3" fill="#fff" stroke="#e2e2e0"/>
  <text x="111.5" y="67.5" font-size="11" text-anchor="middle" fill="#6a6a6a" font-family="Liberation Sans">A1185</text>
  <circle cx="239" cy="120" r="11" fill="#6b7280" stroke="#d7dae0" stroke-width="2"/>
  <rect x="110.5" y="136.5" width="256" height="21.5" rx="4" fill="#fff" stroke="#d5d9de"/>
  <text x="118" y="151.5" font-size="12" fill="#333" font-family="Liberation Sans" textLength="243" lengthAdjust="spacingAndGlyphs">HUNTSMAN DRIVE PORT CLARENCE TS2 1T...</text>
  <line x1="0" y1="240" x2="477" y2="240" stroke="#e5e7eb"/>
</svg>
<div class="abs" style="left:32px;top:274px;font-size:16px;-webkit-text-stroke:0.4px #111827;letter-spacing:0.45px;line-height:18px;color:#111827">Information</div>
<div class="lbl" style="top:320px">Status</div>
<div class="tag gray" style="top:315px"><i style="background:#4b5563"></i>Allocated</div>
<div class="lbl" style="top:362px">Finance Status</div>
<div class="tag gray" style="top:357px"><i style="background:#4b5563"></i>Allocated</div>
<div class="lbl" style="top:399px">Tags</div>
<div class="tag purple" style="top:399px"><i style="background:#8b6bbf"></i>No Waste</div>
<div class="tag red" style="top:433px"><i style="background:#dc2626"></i>Not Tipped</div>
<div class="tag" style="background:#f1f4f8;border-color:#cbd5e1;color:#374151;top:467px"><i style="background:#4b5563"></i>Add Tag</div>
<div class="lbl" style="top:509px">Department</div>
<div class="tag purple" style="top:509px"><i style="background:#8b6bbf"></i>Finance</div>
<div class="lbl" style="top:551px">Job Summary</div>
<div class="tag gray" style="top:551px"><i style="background:#4b5563"></i>Not Subcontracted</div>
<div class="lbl" style="top:593px">Depot</div>
<div class="rect green" style="top:593px">North East Depot</div>
<div class="lbl" style="top:635px">Task Type</div>
<div class="rect blue" style="top:635px">Road Sweeping</div>
<div class="lbl" style="top:677px">Work Type</div>
<div class="rect purple" style="top:677px">Road Sweeping</div>
<div class="lbl" style="top:719px">Client</div>
<div class="val" style="top:721px;line-height:20px;top:719px"><span class="lnk">Subcoal Production TSP Ltd -</span><br><span class="lnk">SUB1002</span></div>
<div class="lbl" style="top:776px">Venue</div>
<div class="val" style="top:775px;line-height:20px;letter-spacing:-0.05px"><span class="lnk">HUNTSMAN DRIVE PORT</span><br><span class="lnk">CLARENCE TS2 1TT</span></div>
<div class="val" style="top:823px;line-height:20px;letter-spacing:-0.1px">SUBCOAL HUNTSMAN DRIVE,<br>PORT CLARENCE, UK, TS2 1TT</div>
<div class="val" style="top:873px"><span style="color:#e0243c;font-style:italic;font-weight:700;letter-spacing:0.8px">///</span><span class="lnk" style="margin-left:8px">like.trucks.switch</span></div>
<div class="val" style="top:899px">33 miles / 41 mins from depot</div>
<div class="lbl" style="top:931px">PO Number</div>
<div class="val" style="top:933px">TSP5032</div>
<div class="lbl" style="top:967px">Public Contact</div>
<div class="val" style="top:969px"><span class="lnk">Keith Turnock</span></div>
<div class="lbl" style="top:1003px">Created By</div>
<div class="val" style="top:1005px"><span class="lnk">David Spellman</span></div>
<div class="val" style="top:1029px">on Fri 9th August at 11:39am</div>
<div class="lbl" style="top:1063px">Last Updated By</div>
<div class="val" style="top:1065px"><span class="lnk">Teamleaf System</span></div>
<div class="abs" style="left:422px;top:1016px;width:48px;height:48px;border-radius:5px;background:#7b5ea3"></div>
<svg class="i" style="position:absolute;left:434px;top:1028px;width:24px;height:24px;color:#fff" viewBox="0 0 24 24"><path d="M7.9 20A9 9 0 1 0 4 16.1L2 22Z"/></svg>
<div class="abs" style="left:478px;top:0;width:8px;height:1079px;background:#e5e7eb;border-radius:4px"></div>
<div class="abs" style="left:478px;top:0;width:8px;height:850px;background:#9ca3af;border-radius:4px"></div></div>
</body></html>
